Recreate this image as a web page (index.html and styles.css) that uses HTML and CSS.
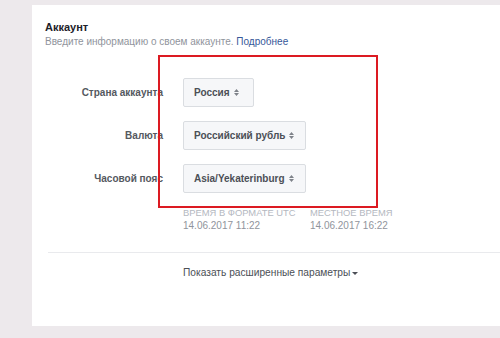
FILE: index.html
```html
<!DOCTYPE html>
<html lang="ru">
<head>
<meta charset="utf-8">
<link rel="stylesheet" href="styles.css">
</head>
<body>
<div class="card">
  <div class="head">
    <div class="title">Аккаунт</div>
    <div class="sub">Введите информацию о своем аккаунте. <a class="link">Подробнее</a></div>
  </div>
  <div class="form">
    <div class="label">Страна аккаунта</div>
    <div class="ctl"><span class="sel">Россия <svg class="arr" viewBox="0 0 5 7" width="5" height="7"><path d="M0 3L2.5 0L5 3Z M0 4L2.5 7L5 4Z"/></svg></span></div>
    <div class="label">Валюта</div>
    <div class="ctl"><span class="sel wide">Российский рубль <svg class="arr" viewBox="0 0 5 7" width="5" height="7"><path d="M0 3L2.5 0L5 3Z M0 4L2.5 7L5 4Z"/></svg></span></div>
    <div class="label">Часовой пояс</div>
    <div class="ctl"><span class="sel wide">Asia/Yekaterinburg <svg class="arr" viewBox="0 0 5 7" width="5" height="7"><path d="M0 3L2.5 0L5 3Z M0 4L2.5 7L5 4Z"/></svg></span></div>
  </div>
  <div class="times">
    <div class="tcol">
      <div class="tlabel">Время в формате UTC</div>
      <div class="tval">14.06.2017 11:22</div>
    </div>
    <div class="tcol">
      <div class="tlabel">Местное время</div>
      <div class="tval">14.06.2017 16:22</div>
    </div>
  </div>
  <div class="divider"></div>
  <div class="more">Показать расширенные параметры<span class="caret"></span></div>
</div>
<div class="highlight"></div>
</body>
</html>
```

FILE: styles.css
```css
html, body {
  margin: 0;
  padding: 0;
}
body {
  background: #ede9ec;
  font-family: "Liberation Sans", Arial, sans-serif;
  width: 500px;
  height: 338px;
  overflow: hidden;
  position: relative;
}
.card {
  margin: 5px 0 0 32px;
  height: 321px;
  background: #ffffff;
  box-sizing: border-box;
  padding-top: 15px;
}
.head {
  padding-left: 13px;
}
.title {
  font-size: 11px;
  font-weight: bold;
  color: #1d2129;
  line-height: 14px;
}
.sub {
  font-size: 10px;
  color: #90949c;
  line-height: 13px;
  margin-top: 1px;
}
.link {
  color: #365899;
}
.form {
  display: grid;
  grid-template-columns: 131px auto;
  column-gap: 20px;
  row-gap: 14px;
  align-items: center;
  margin-top: 30px;
}
.label {
  text-align: right;
  font-size: 10px;
  font-weight: bold;
  color: #55595f;
  white-space: nowrap;
}
.ctl {
  display: flex;
}
.sel {
  display: inline-flex;
  align-items: center;
  height: 29px;
  box-sizing: border-box;
  padding: 0 0 0 10px;
  background: #f6f7f9;
  border: 1px solid #dadde1;
  border-radius: 2px;
  font-size: 10px;
  font-weight: bold;
  color: #4b4f56;
  width: 71px;
  white-space: nowrap;
}
.sel.wide {
  width: 123px;
}
.arr {
  margin-left: 4px;
  fill: #7f838a;
}
.times {
  display: flex;
  margin: 14px 0 0 151px;
}
.tcol {
  width: 127px;
}
.tlabel {
  font-size: 9.4px;
  text-transform: uppercase;
  color: #b4b8bf;
  line-height: 12px;
}
.tval {
  font-size: 10px;
  color: #90949c;
  line-height: 13px;
}
.divider {
  height: 1px;
  background: #e9eaed;
  margin: 20px 0 0 16px;
}
.more {
  margin: 14px 0 0 151px;
  font-size: 10.2px;
  color: #4b4f56;
  display: flex;
  align-items: center;
}
.caret {
  width: 0;
  height: 0;
  border-left: 3px solid transparent;
  border-right: 3px solid transparent;
  border-top: 3px solid #4b4f56;
  margin-left: 2px;
  margin-top: 1px;
}
.highlight {
  position: absolute;
  left: 158px;
  top: 55px;
  width: 220px;
  height: 153px;
  box-sizing: border-box;
  border: 2px solid #dc1a22;
}
```
